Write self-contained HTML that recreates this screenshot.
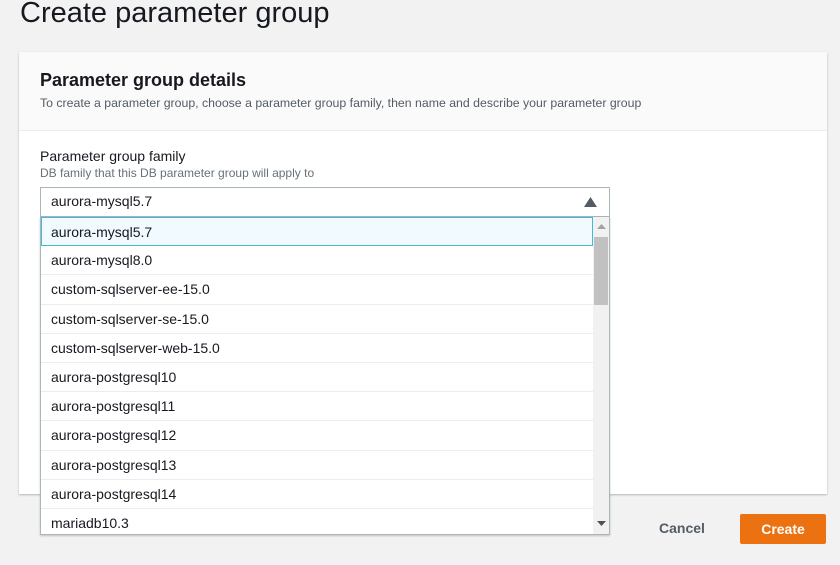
<!DOCTYPE html>
<html><head><style>
*{margin:0;padding:0;box-sizing:border-box}
body{width:840px;height:565px;background:#f2f2f2;font-family:"Liberation Sans",sans-serif;color:#16191f;position:relative;overflow:hidden}
.a{position:absolute}
h1{position:absolute;left:20px;top:-3px;font-size:29px;font-weight:normal;color:#16191f;white-space:nowrap}
.card{left:19px;top:52px;width:808px;height:442px;background:#fff;box-shadow:0 1px 2px rgba(0,0,0,.25)}
.hdr{left:0;top:0;width:808px;height:79px;background:#fafafa;border-bottom:1px solid #eaeded}
.row{position:absolute;left:0;width:552px;height:29.2px;line-height:28px;padding-left:10px;font-size:14px;border-bottom:1px solid #eaeded;background:#fff}
</style></head><body>
<h1>Create parameter group</h1>
<div class="a card">
 <div class="a hdr">
  <div class="a" style="left:21px;top:18px;font-size:18px;font-weight:bold">Parameter group details</div>
  <div class="a" style="left:21px;top:44px;font-size:12.3px;color:#545b64;white-space:nowrap">To create a parameter group, choose a parameter group family, then name and describe your parameter group</div>
 </div>
 <div class="a" style="left:21px;top:96px;font-size:14px">Parameter group family</div>
 <div class="a" style="left:21px;top:114px;font-size:12px;color:#687078">DB family that this DB parameter group will apply to</div>
</div>
<div class="a" style="left:40px;top:187px;width:570px;height:30px;background:#fff;border:1px solid #aab7b8;font-size:14px;line-height:27px;padding-left:10px">aurora-mysql5.7
 <svg class="a" style="left:543px;top:9px" width="13" height="10"><path d="M0 10 L6.5 0 L13 10Z" fill="#545b64"/></svg>
</div>
<div class="a" style="left:40px;top:217px;width:570px;height:318px;background:#fff;border:1px solid #aab7b8;border-top:none;box-shadow:0 1px 2px rgba(0,0,0,.2);overflow:hidden">
 <div class="row" style="top:0;background:#f1faff;border:1px solid #44b9d6;height:29px;padding-left:9px">aurora-mysql5.7</div>
 <div class="row" style="top:29.2px">aurora-mysql8.0</div>
 <div class="row" style="top:58.4px">custom-sqlserver-ee-15.0</div>
 <div class="row" style="top:87.6px">custom-sqlserver-se-15.0</div>
 <div class="row" style="top:116.8px">custom-sqlserver-web-15.0</div>
 <div class="row" style="top:146px">aurora-postgresql10</div>
 <div class="row" style="top:175.2px">aurora-postgresql11</div>
 <div class="row" style="top:204.4px">aurora-postgresql12</div>
 <div class="row" style="top:233.6px">aurora-postgresql13</div>
 <div class="row" style="top:262.8px">aurora-postgresql14</div>
 <div class="row" style="top:292px;border:none">mariadb10.3</div>
 <div class="a" style="left:552px;top:0;width:17px;height:318px;background:#f1f1f1">
  <svg class="a" style="left:4px;top:7px" width="9" height="5"><path d="M0 5L4.5 0L9 5Z" fill="#a3a3a3"/></svg>
  <div class="a" style="left:1px;top:20px;width:14px;height:68px;background:#c1c1c1"></div>
  <svg class="a" style="left:4px;top:304px" width="9" height="5"><path d="M0 0L4.5 5L9 0Z" fill="#505050"/></svg>
 </div>
</div>
<div class="a" style="left:659px;top:520px;font-size:14px;font-weight:bold;color:#545b64">Cancel</div>
<div class="a" style="left:740px;top:514px;width:86px;height:30px;background:#ec7211;border-radius:2px;color:#fff;font-weight:bold;font-size:14px;text-align:center;line-height:30px">Create</div>
</body></html>
